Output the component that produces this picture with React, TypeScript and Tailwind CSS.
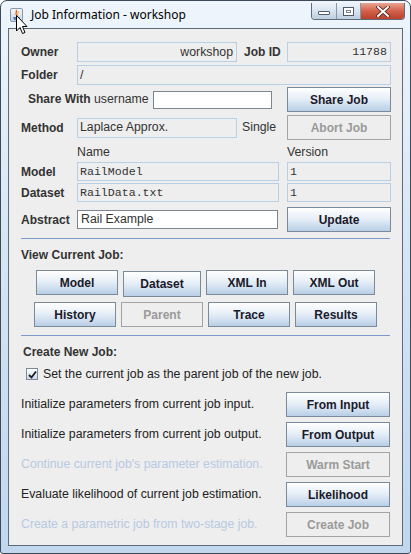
import React from "react";

const sans = "font-['Liberation_Sans',Arial,sans-serif]";
const mono = "font-['Liberation_Mono','Courier_New',monospace]";

type BtnProps = {
  label: string;
  w?: string;
  h?: string;
  disabled?: boolean;
  className?: string;
};

const Btn = ({ label, w = "w-[104px]", h = "h-[25px]", disabled, className = "" }: BtnProps) => (
  <div
    className={[
      w,
      h,
      "flex shrink-0 items-center justify-center border text-[12px] font-bold",
      disabled
        ? "border-[#a3a3a3] bg-[#eeeeee] text-[#9a9a9a]"
        : "border-[#7a8a99] bg-gradient-to-b from-[#ffffff] via-[#e4edf7] to-[#b9cfe6] text-[#1a1a2a]",
      className,
    ].join(" ")}
  >
    {label}
  </div>
);

type FieldProps = {
  value: string;
  w: string;
  h?: string;
  isMono?: boolean;
  white?: boolean;
  right?: boolean;
};

const Field = ({ value, w, h = "h-[20px]", isMono, white, right }: FieldProps) => (
  <div
    className={[
      w,
      h,
      "flex shrink-0 items-center border text-[#333333]",
      isMono ? `${mono} text-[11.6px]` : `${sans} text-[12.3px]`,
      white ? "border-[#7d8690] bg-white pl-[3px] text-[#222222]" : "border-[#b8cfe5] bg-[#eeeeee]",
      right ? "justify-end pr-[3px]" : "pl-[2px]",
    ].join(" ")}
  >
    {value}
  </div>
);

const Label = ({ children, w = "w-[56px]" }: { children: React.ReactNode; w?: string }) => (
  <div className={`${w} shrink-0 text-[12px] font-bold text-[#333333]`}>{children}</div>
);

const ActionRow = ({ text, button, disabled }: { text: string; button: string; disabled?: boolean }) => (
  <div className="flex h-[25px] items-center justify-between">
    <div className={`text-[12.3px] ${disabled ? "text-[#b8c9e2]" : "text-[#222222]"}`}>{text}</div>
    <Btn label={button} disabled={disabled} />
  </div>
);

const TitleBar = () => (
  <div className="relative -mx-[7px] h-[27px] shrink-0">
    {/* app icon */}
    <div className="absolute left-[9px] top-[7px] flex h-[14px] w-[13px] items-end justify-center rounded-[2px] border border-[#8a97a8] bg-gradient-to-b from-[#f4f7fb] to-[#c9d4e2]">
      <svg width="11" height="12" viewBox="0 0 11 12">
        <path d="M5 1 C7 3 3 4 6 7" stroke="#e2631d" strokeWidth="1.3" fill="none" />
        <path d="M7 2 C8 4 5 5 7 7" stroke="#f39a2a" strokeWidth="1" fill="none" />
        <path d="M2 8 L9 8 L8 11 L3 11 Z" fill="#5a7db0" />
      </svg>
    </div>
    <div className="absolute left-[30px] top-[6px] font-['Noto_Sans',sans-serif] text-[12px] leading-[16px] text-black">
      Job Information - workshop
    </div>
    {/* caption buttons */}
    <div className="absolute right-[5px] top-[2px] flex h-[17px] overflow-hidden rounded-b-[4px] border border-t-0 border-[#5e6b7c]">
      <div className="flex w-[25px] items-end justify-center border-r border-[#8a97a8] bg-gradient-to-b from-[#eef3f9] via-[#d9e4f0] to-[#bccddf] pb-[4px]">
        <div className="h-[4px] w-[12px] rounded-[1px] border border-[#4f5b6a] bg-white" />
      </div>
      <div className="flex w-[24px] items-center justify-center border-r border-[#8a97a8] bg-gradient-to-b from-[#eef3f9] via-[#d9e4f0] to-[#bccddf]">
        <div className="h-[9px] w-[11px] border border-[#4f5b6a] bg-white">
          <div className="mx-auto mt-[2px] h-[3px] w-[5px] border border-[#7c8896]" />
        </div>
      </div>
      <div className="flex w-[43px] items-center justify-center bg-gradient-to-b from-[#e9a493] via-[#d3604a] to-[#b8412d]">
        <svg width="14" height="11" viewBox="0 0 14 11">
          <path d="M2 1 L12 10 M12 1 L2 10" stroke="#4a2018" strokeWidth="3.6" strokeLinecap="round" />
          <path d="M2 1 L12 10 M12 1 L2 10" stroke="#ffffff" strokeWidth="2" strokeLinecap="round" />
        </svg>
      </div>
    </div>
    {/* mouse pointer */}
    <svg className="absolute left-[15px] top-[14px]" width="12" height="20" viewBox="0 0 12 20">
      <path d="M0.5 0.5 L0.5 16 L4 12.5 L6.5 18.5 L9 17.5 L6.5 11.5 L11 11.5 Z" fill="#ffffff" stroke="#000000" strokeWidth="1" />
    </svg>
  </div>
);

export default function App() {
  return (
    <div className={`h-[554px] w-[411px] bg-white ${sans}`}>
      <div className="flex h-full w-full flex-col rounded-t-[7px] rounded-b-[3px] border border-[#3f4a58] bg-gradient-to-b from-[#eef5fc] via-[#d3e4f4] to-[#c0d7ee] px-[7px] pb-[7px]">
        <TitleBar />
        <div className="flex flex-1 flex-col border border-[#5f6b79] bg-[#eeeeee] px-[12px] pt-[13px]">
          {/* owner / job id */}
          <div className="flex h-[20px] items-center">
            <Label>Owner</Label>
            <Field value="workshop" w="w-[160px]" right />
            <div className="w-[50px] shrink-0 pl-[7px] text-[12px] font-bold text-[#333333]">Job ID</div>
            <Field value="11788" w="w-[104px]" isMono right />
          </div>
          <div className="mt-[3px] flex h-[20px] items-center">
            <Label>Folder</Label>
            <Field value="/" w="w-[314px]" />
          </div>
          {/* share */}
          <div className="mt-[2px] flex h-[25px] items-center">
            <div className="w-[132px] shrink-0 pl-[7px] text-[12.3px] text-[#333333]">
              <span className="text-[12px] font-bold">Share With</span> username
            </div>
            <Field value="" w="w-[119px]" h="h-[18px]" white />
            <div className="w-[15px] shrink-0" />
            <Btn label="Share Job" />
          </div>
          {/* method */}
          <div className="mt-[3px] flex h-[25px] items-center">
            <Label>Method</Label>
            <Field value="Laplace Approx." w="w-[160px]" />
            <div className="w-[50px] shrink-0 pl-[5px] text-[12.3px] text-[#333333]">Single</div>
            <Btn label="Abort Job" disabled />
          </div>
          {/* headers */}
          <div className="flex h-[22px] items-center pt-[2px] text-[12.3px] text-[#333333]">
            <div className="w-[56px] shrink-0" />
            <div className="w-[210px] shrink-0">Name</div>
            <div>Version</div>
          </div>
          <div className="flex h-[19px] items-center">
            <Label>Model</Label>
            <Field value="RailModel" w="w-[202px]" h="h-[19px]" isMono />
            <div className="w-[8px] shrink-0" />
            <Field value="1" w="w-[104px]" h="h-[19px]" isMono />
          </div>
          <div className="mt-[2px] flex h-[19px] items-center">
            <Label>Dataset</Label>
            <Field value="RailData.txt" w="w-[202px]" h="h-[19px]" isMono />
            <div className="w-[8px] shrink-0" />
            <Field value="1" w="w-[104px]" h="h-[19px]" isMono />
          </div>
          {/* abstract */}
          <div className="mt-[5px] flex h-[25px] items-center">
            <Label>Abstract</Label>
            <Field value="Rail Example" w="w-[201px]" h="h-[19px]" white />
            <div className="w-[9px] shrink-0" />
            <Btn label="Update" />
          </div>
          <div className="mt-[6px] h-px bg-[#7e9bc9]" />
          {/* view current job */}
          <div className="mt-[8px] h-[16px] text-[12px] font-bold leading-[16px] text-[#333333]">View Current Job:</div>
          <div className="mt-[7px] flex items-start justify-center gap-[5px]">
            <Btn label="Model" w="w-[82px]" />
            <Btn label="Dataset" w="w-[78px]" h="h-[26px]" className="mt-px" />
            <Btn label="XML In" w="w-[82px]" />
            <Btn label="XML Out" w="w-[82px]" />
          </div>
          <div className="mt-[5px] flex justify-center gap-[5px]">
            <Btn label="History" w="w-[82px]" />
            <Btn label="Parent" w="w-[82px]" disabled />
            <Btn label="Trace" w="w-[82px]" />
            <Btn label="Results" w="w-[82px]" />
          </div>
          <div className="mt-[8px] h-px bg-[#7e9bc9]" />
          {/* create new job */}
          <div className="mt-[8px] h-[16px] pl-[2px] text-[12px] font-bold leading-[16px] text-[#333333]">Create New Job:</div>
          <div className="mt-[6px] flex h-[16px] items-center pl-[5px]">
            <div className="flex h-[12px] w-[12px] items-center justify-center border border-[#7a8a99] bg-gradient-to-b from-[#ffffff] to-[#c9daed]">
              <svg width="9" height="9" viewBox="0 0 9 9">
                <path d="M1 5 L3.5 7.5 L8 1.5" stroke="#1a1a1a" strokeWidth="1.8" fill="none" />
              </svg>
            </div>
            <div className="pl-[5px] text-[12.3px] text-[#222222]">Set the current job as the parent job of the new job.</div>
          </div>
          <div className="mt-[10px] flex flex-col gap-[5px]">
            <ActionRow text="Initialize parameters from current job input." button="From Input" />
            <ActionRow text="Initialize parameters from current job output." button="From Output" />
            <ActionRow text="Continue current job's parameter estimation." button="Warm Start" disabled />
            <ActionRow text="Evaluate likelihood of current job estimation." button="Likelihood" />
            <ActionRow text="Create a parametric job from two-stage job." button="Create Job" disabled />
          </div>
        </div>
      </div>
    </div>
  );
}
